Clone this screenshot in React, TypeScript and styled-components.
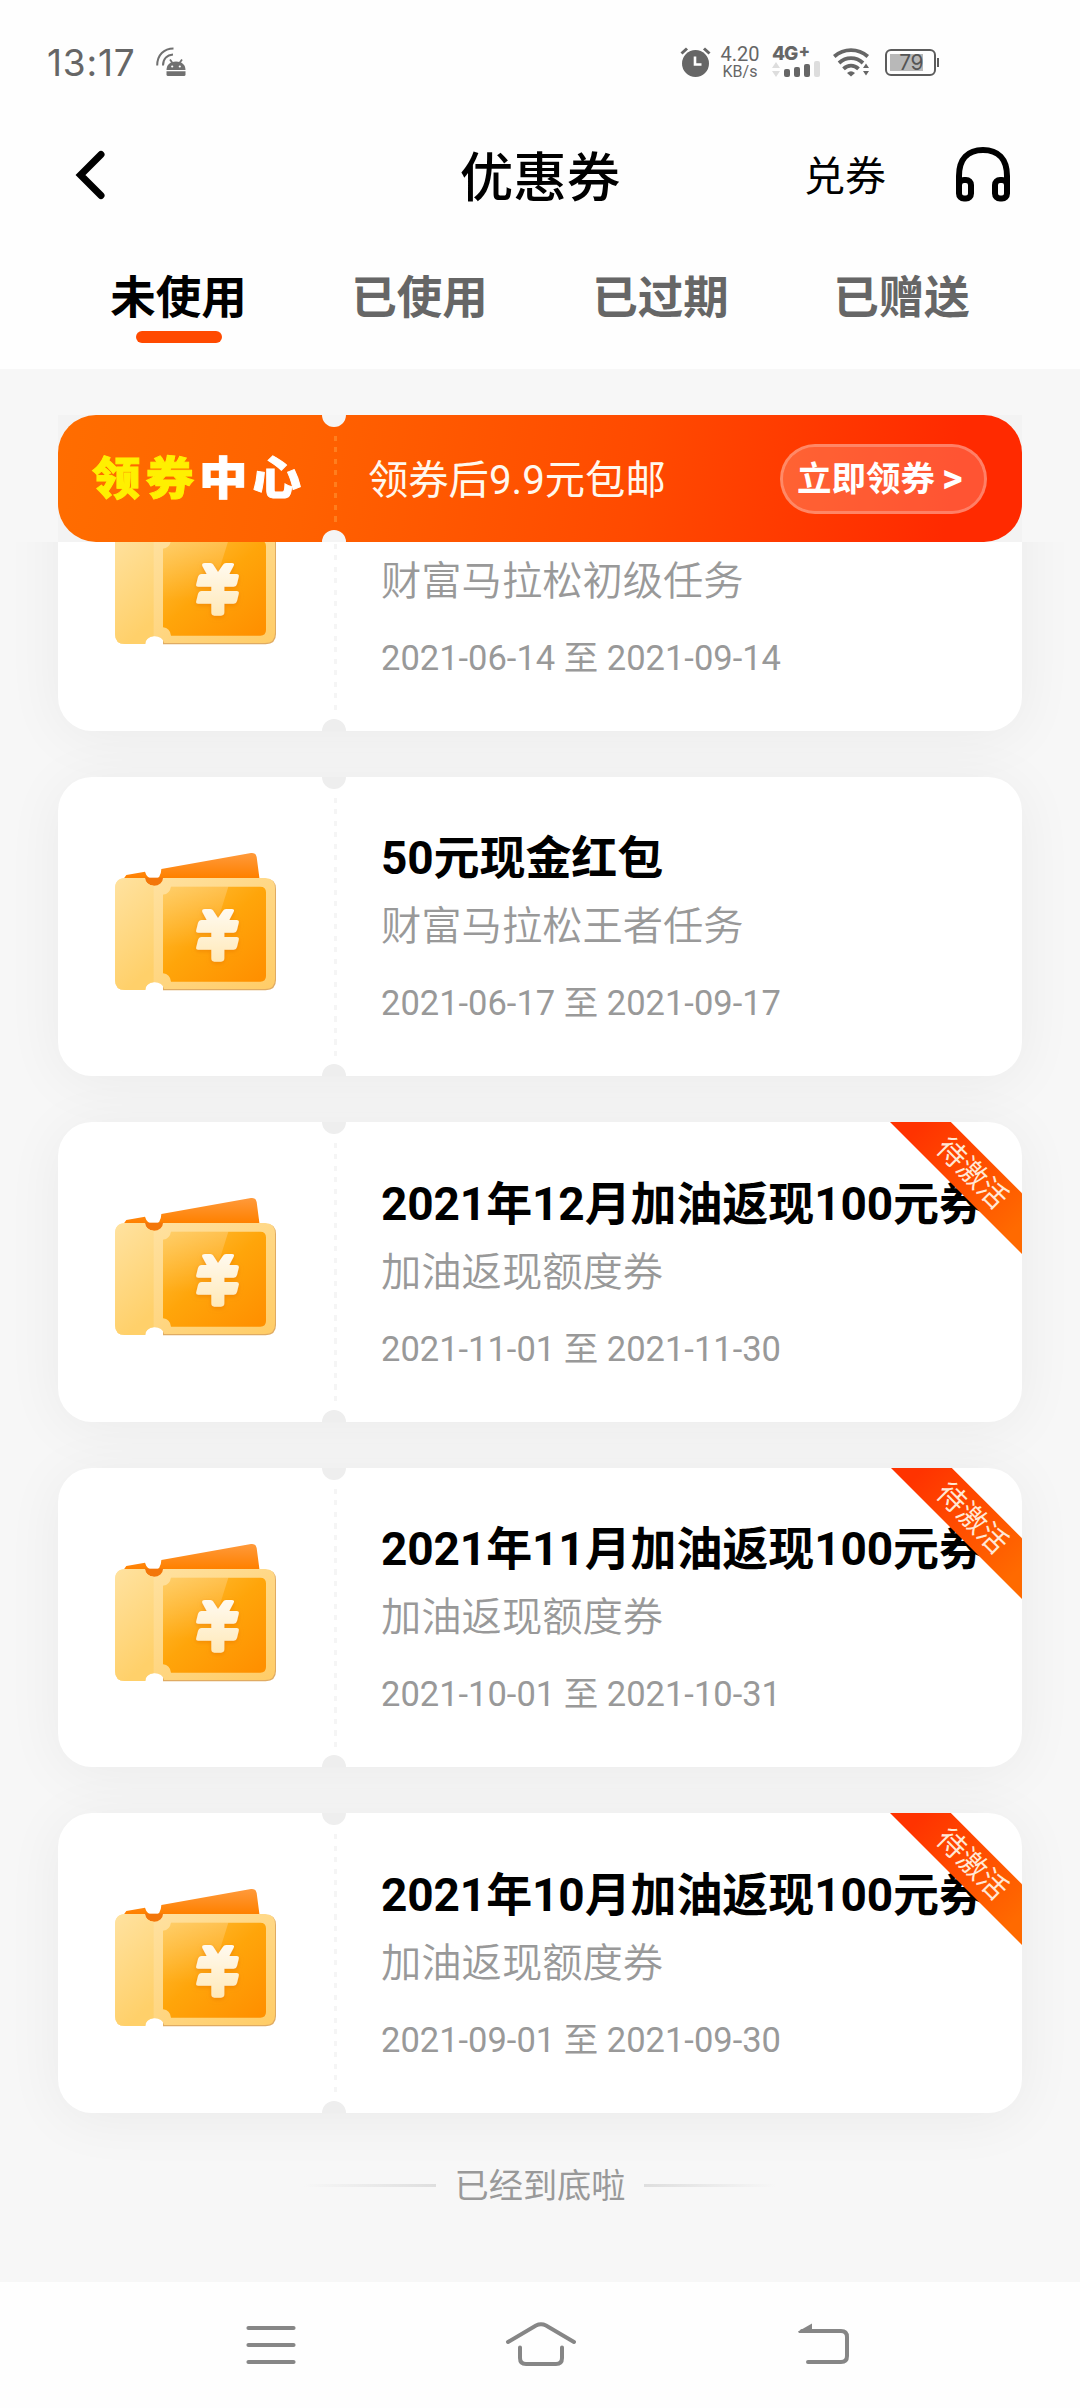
import React from 'react';
import styled, { createGlobalStyle, css } from 'styled-components';

const sans = `Roboto, 'Noto Sans CJK SC', sans-serif`;
const paper = '#f7f7f7';

const GlobalStyle = createGlobalStyle`
  * { box-sizing: border-box; }
  body { margin: 0; background: #fff; }
`;

const Screen = styled.div`
  width: 1080px;
  height: 2408px;
  display: flex;
  flex-direction: column;
  overflow: hidden;
  background: #fefefe;
  font-family: ${sans};
  color: #000;
`;

/* ---------- status bar ---------- */

const StatusBar = styled.header`
  height: 124px;
  flex: none;
  display: flex;
  align-items: center;
  padding: 0 141px 0 47px;
  color: #666;
`;

const Clock = styled.span`
  font-size: 37px;
  font-family: Inter, ${sans};
  font-weight: 400;
  letter-spacing: 0.8px;
  width: 109px;
  white-space: nowrap;
`;

const StatusRight = styled.div`
  margin-left: auto;
  display: flex;
  align-items: center;
`;

const NetSpeed = styled.div`
  width: 38px;
  margin: 0 13px 0 10px;
  display: flex;
  flex-direction: column;
  align-items: center;
  white-space: nowrap;
`;

const SpeedValue = styled.span`
  font-size: 20px;
  line-height: 18px;
`;

const SpeedUnit = styled.span`
  font-size: 16px;
  line-height: 17px;
`;

const Signal = styled.div`
  width: 49px;
  height: 30px;
  margin-right: 12px;
  display: flex;
  flex-direction: column;
  justify-content: space-between;
`;

const NetType = styled.span`
  font-family: Inter, ${sans};
  font-size: 19px;
  line-height: 14px;
  font-weight: 800;
  letter-spacing: -1px;
  white-space: nowrap;
  display: flex;
  gap: 1px;
`;

const Plus = styled.span`
  font-size: 17px;
  line-height: 8px;
`;

const Bars = styled.div`
  display: flex;
  align-items: flex-end;
  height: 16px;
  gap: 4px;
`;

const Bar = styled.i<{ $h: number; $dim?: boolean }>`
  width: 6px;
  height: ${(p) => p.$h}px;
  border-radius: 2px;
  background: ${(p) => (p.$dim ? '#ddd' : '#666')};
`;

const BatteryGroup = styled.div`
  display: flex;
  align-items: center;
  gap: 1px;
  margin-left: 15px;
`;

const Battery = styled.div`
  width: 51px;
  height: 27px;
  padding: 3px;
  border: 2px solid #5c5c5c;
  border-radius: 6px;
`;

const Charge = styled.div`
  width: 33px;
  height: 17px;
  background: #b8b8b8;
  color: #555;
  font-family: Inter, ${sans};
  font-size: 21px;
  line-height: 18px;
  letter-spacing: -0.5px;
  text-align: right;
`;

const BatteryTip = styled.i`
  width: 2px;
  height: 9px;
  background: #5c5c5c;
`;

/* ---------- title bar ---------- */

const TitleBar = styled.nav`
  height: 106px;
  flex: none;
  display: grid;
  grid-template-columns: 1fr auto 1fr;
  align-items: center;
  padding: 0 70px 5px 75px;
`;

const Title = styled.h1`
  margin: 0;
  padding: 8px 5px 0 0;
  font-size: 53.5px;
  line-height: 64px;
  font-weight: 500;
`;

const TitleActions = styled.div`
  display: flex;
  justify-content: flex-end;
  align-items: center;
  gap: 70px;
`;

const Redeem = styled.span`
  padding-top: 4px;
  font-size: 41px;
  line-height: 50px;
`;

/* ---------- tabs ---------- */

const Tabs = styled.div`
  height: 139px;
  flex: none;
  display: flex;
  padding: 0 56px 0 60px;
`;

const Tab = styled.div<{ $active?: boolean }>`
  flex: 1;
  display: flex;
  flex-direction: column;
  align-items: center;
  padding: 39px 4px 0 0;
  font-size: 45.5px;
  line-height: 60px;
  font-weight: 700;
  color: #666;
  &::after {
    content: '';
    width: 86px;
    height: 12px;
    margin-top: 2px;
    border-radius: 6px;
  }
  ${(p) =>
    p.$active &&
    css`
      color: #000;
      &::after {
        background: #ff4a00;
      }
    `}
`;

/* ---------- promo banner ---------- */

const PromoArea = styled.section`
  height: 173px;
  flex: none;
  padding: 46px 58px 0;
  background: ${paper};
`;

const PromoFrame = styled.div`
  background: #f3f3f3;
`;

const Promo = styled.div`
  position: relative;
  height: 127px;
  border-radius: 38px;
  background: linear-gradient(100deg, #ff6d00 0%, #ff6200 25%, #ff4a00 60%, #ff2a00 92%, #ff2a00 100%);
  display: flex;
  align-items: center;
  padding: 0 35px 0 34px;
`;

const PromoLogo = styled.strong`
  width: 276px;
  padding-top: 3px;
  font-size: 48.5px;
  line-height: 60px;
  font-weight: 900;
  letter-spacing: 5px;
  color: #fff;
  white-space: nowrap;
  -webkit-text-stroke: 1px currentColor;
  transform: scaleY(0.93);
`;

const Highlight = styled.span`
  color: #fff000;
`;

const PromoText = styled.span`
  flex: 1;
  padding-top: 4px;
  font-size: 40.3px;
  line-height: 54px;
  color: #fff8ee;
`;

const PromoButton = styled.div`
  width: 207px;
  height: 70px;
  display: flex;
  align-items: center;
  gap: 7px;
  padding-left: 14px;
  border: 3px solid rgba(255, 255, 255, 0.4);
  border-radius: 35px;
  background: rgba(255, 255, 255, 0.2);
  background-clip: padding-box;
  color: #fff;
  font-size: 34.5px;
  font-weight: 700;
  line-height: 44px;
  white-space: nowrap;
`;

const Chevron = styled.span`
  font-size: 40px;
  line-height: 40px;
`;

/* Perforation between the stub and the body of a ticket */
const Perforation = styled.i<{ $color: string; $dash: string }>`
  position: absolute;
  left: 264px;
  top: 0;
  bottom: 0;
  width: 24px;
  overflow: hidden;
  background: repeating-linear-gradient(
      to bottom,
      ${(p) => p.$dash} 0 5px,
      transparent 5px 11.5px
    )
    12px 21px / 3px calc(100% - 40px) no-repeat;
  &::before,
  &::after {
    content: '';
    position: absolute;
    left: 0;
    width: 24px;
    height: 24px;
    border-radius: 50%;
    background: ${(p) => p.$color};
  }
  &::before {
    top: -12px;
  }
  &::after {
    bottom: -12px;
  }
`;

/* ---------- coupon list ---------- */

const ListViewport = styled.main`
  height: 1740px;
  flex: none;
  overflow: hidden;
  background: ${paper};
`;

const List = styled.div`
  margin-top: -111px;
  padding: 0 58px;
  display: flex;
  flex-direction: column;
  gap: 46px;
`;

const Card = styled.article`
  position: relative;
  height: 299.5px;
  display: flex;
  border-radius: 34px;
  background: #fff;
  box-shadow: 0 6px 58px rgba(0, 0, 0, 0.055);
`;

const Stub = styled.div`
  width: 276px;
  flex: none;
  padding: 74px 0 0 51px;
`;

const Info = styled.div`
  flex: 1;
  display: flex;
  flex-direction: column;
  justify-content: flex-end;
  padding: 0 0 48px 47px;
  white-space: nowrap;
  color: #999;
`;

const CouponName = styled.h2`
  margin: 0 0 12px;
  font-size: 46px;
  line-height: 60px;
  font-weight: 700;
  letter-spacing: -0.1px;
  color: #000;
`;

const CouponNote = styled.p`
  margin: 0 0 24px;
  font-size: 40.3px;
  line-height: 54px;
  font-weight: 350;
`;

const CouponDate = styled.p`
  margin: 0;
  font-size: 34.5px;
  line-height: 50px;
`;

const RibbonClip = styled.div`
  position: absolute;
  top: 0;
  right: 0;
  width: 132px;
  height: 132px;
  overflow: hidden;
`;

const Ribbon = styled.div`
  position: absolute;
  left: -18.5px;
  top: 29.5px;
  width: 200px;
  height: 42.5px;
  transform: rotate(45deg);
  background: linear-gradient(to right, #ff3300 15%, #ff6a00 85%);
  color: #ffe8d6;
  font-size: 28.8px;
  line-height: 43px;
  text-align: center;
`;

const EndMark = styled.div`
  display: flex;
  justify-content: center;
  align-items: center;
  gap: 19px;
  margin-top: 3px;
  font-size: 34.2px;
  line-height: 48px;
  color: #999;
`;

const EndLine = styled.i<{ $to: string }>`
  width: 132px;
  height: 3px;
  background: linear-gradient(${(p) => p.$to}, rgba(220, 220, 220, 0), #dedede);
`;

/* ---------- system navigation ---------- */

const SystemNav = styled.footer`
  flex: 1;
  display: flex;
  justify-content: space-between;
  padding: 37px 226px 0 242px;
`;

const AlarmIcon = () => (
  <svg width="31" height="30" viewBox="0 0 31 30">
    <circle cx="15.5" cy="16.5" r="13.5" fill="#666" />
    <path d="M1.500 6.500 7 1.500M29.500 6.500 24 1.500" stroke="#666" strokeWidth="3" />
    <path d="M15 9.500V17.500H21.500" fill="none" stroke="#fff" strokeWidth="2.600" />
  </svg>
);

const CastIcon = () => (
  <svg width="30" height="30" viewBox="0 0 30 30" fill="none" stroke="#707070">
    <path d="M1.200 18.500C1.200 8 8 1.500 17.500 1.500" strokeWidth="2" />
    <path d="M7 18.500C7 12 11 8 17 7.500" strokeWidth="2" />
    <path d="M14 12.500 16.500 16M26 12.500 23.500 16" strokeWidth="1.800" />
    <path d="M10.500 23C10.500 18 14 14.500 20 14.500S29.500 18 29.500 23Z" fill="#707070" stroke="none" />
    <path d="M10.500 24.200H29.500V27.500Q29.500 29 28 29H12Q10.500 29 10.500 27.500Z" fill="#707070" stroke="none" />
    <circle cx="16.200" cy="19.500" r="1.100" fill="#fff" stroke="none" />
    <circle cx="23.800" cy="19.500" r="1.100" fill="#fff" stroke="none" />
  </svg>
);

const WifiIcon = () => (
  <svg width="37" height="29" viewBox="0 0 37 29" fill="none" stroke="#666" strokeWidth="3.800">
    <path d="M1.200 8.500C11 0 25 0 34.800 8.500" />
    <path d="M6 15C13 8.500 23 8.500 30 15" />
    <path d="M10.500 20.800C15 16.500 21 16.500 25.500 20.800" />
    <path d="M14 25Q18 21.500 22 25L18 28.500Z" fill="#666" stroke="none" />
    <path d="M30 20 33 15.500 36 20ZM30 23 33 27.500 36 23Z" fill="#666" stroke="none" />
  </svg>
);

const DataArrows = () => (
  <svg width="8" height="15" viewBox="0 0 8 15" fill="#ddd">
    <path d="M0 6 4 0 8 6ZM0 9 4 15 8 9Z" />
  </svg>
);

const BackIcon = () => (
  <svg width="30" height="50" viewBox="0 0 30 50" fill="none" stroke="#000" strokeWidth="7" strokeLinecap="round">
    <path d="M26 4.500 5.500 25 26 45.500" />
  </svg>
);

const HeadphoneIcon = () => (
  <svg width="54" height="55" viewBox="0 0 54 55" fill="none" stroke="#000" strokeWidth="6">
    <path d="M3 40V29C3 12 12 3 27 3S51 12 51 29V40" />
    <rect x="3" y="33" width="12" height="18.500" rx="5" />
    <rect x="39" y="33" width="12" height="18.500" rx="5" />
  </svg>
);

const TicketIcon = ({ id }: { id: string }) => (
  <svg width="174" height="144" viewBox="60 90 522 432">
    <defs>
      <linearGradient id={`${id}-back`} x1="0" y1="0" x2="0" y2="1">
        <stop offset="0" stopColor="#ff9a3c" />
        <stop offset="0.700" stopColor="#ff8100" />
        <stop offset="1" stopColor="#f57c0c" />
      </linearGradient>
      <linearGradient id={`${id}-stub`} x1="0" y1="0" x2="0.300" y2="1">
        <stop offset="0" stopColor="#ffe2a0" />
        <stop offset="1" stopColor="#ffd06a" />
      </linearGradient>
      <linearGradient id={`${id}-frame`} x1="0" y1="0" x2="1" y2="1">
        <stop offset="0" stopColor="#ffe4a8" />
        <stop offset="1" stopColor="#ffcc66" />
      </linearGradient>
      <linearGradient id={`${id}-face`} x1="0" y1="0" x2="0.900" y2="1">
        <stop offset="0" stopColor="#ffc140" />
        <stop offset="0.500" stopColor="#ffa50a" />
        <stop offset="1" stopColor="#ff9000" />
      </linearGradient>
      <linearGradient id={`${id}-shine`} x1="0" y1="0" x2="0" y2="1">
        <stop offset="0" stopColor="#fff" stopOpacity="0.220" />
        <stop offset="0.700" stopColor="#fff" stopOpacity="0" />
      </linearGradient>
      <linearGradient id={`${id}-sign`} x1="0" y1="0" x2="0" y2="1">
        <stop offset="0" stopColor="#fffaf0" />
        <stop offset="1" stopColor="#ffe9b8" />
      </linearGradient>
      <filter id={`${id}-soft`} x="-20%" y="-20%" width="140%" height="150%">
        <feDropShadow dx="0" dy="5" stdDeviation="6" floodColor="#e87800" floodOpacity="0.550" />
      </filter>
    </defs>
    <path
      d="M105 172 112 162 168 152Q174 174 195 174T217 144L486 96Q500 94 503 108L515 200H105Z"
      fill={`url(#${id}-back)`}
    />
    <path d="M166 170H226V194H166Z" fill="#f3760a" />
    <path d="M222 173H530Q561 173 561 204V477Q561 507.500 530 507.500H222Z" fill="#e0ab62" />
    <path
      d="M110 171H168A27 23 0 0 0 222 171H528Q558 171 558 201V474Q558 504 528 504H225A28 22 0 0 0 169 507H108Q78 507 78 477V203Q78 171 110 171Z"
      fill={`url(#${id}-frame)`}
    />
    <path
      d="M110 171H168A27 23 0 0 0 194 194V483A28 22 0 0 0 169 507H108Q78 507 78 477V203Q78 171 110 171Z"
      fill={`url(#${id}-stub)`}
    />
    <path
      d="M246 197H514Q531 197 531 214V465Q531 482 514 482H246Q243 459 222 457V221Q243 218 246 197Z"
      fill={`url(#${id}-face)`}
    />
    <path d="M246 197H418L345 430 222 457V221Q243 218 246 197Z" fill={`url(#${id}-shine)`} />
    <g filter={`url(#${id}-soft)`} fill={`url(#${id}-sign)`}>
      <path d="M348 264H364Q370 264 373 269L387 291 402 269Q405 264 411 264H428Q438 264 434 272L421 297H442Q452 297 449 307L444 327Q442 335 434 335H406V348H442Q452 348 449 358L444 378Q442 386 434 386H406V412Q406 422 396 422H376Q367 422 367 412V386H328Q319 386 322 377L327 357Q330 348 338 348H367V335H328Q319 335 322 326L327 306Q330 297 338 297H353L340 273Q337 264 348 264Z" />
    </g>
  </svg>
);

const MenuIcon = () => (
  <svg width="60" height="56" viewBox="242 2319 60 56" stroke="#868686" strokeWidth="4.200" strokeLinecap="round">
    <path d="M248.500 2328H293.500M248.500 2345H293.500M248.500 2362H293.500" />
  </svg>
);

const HomeIcon = () => (
  <svg width="90" height="56" viewBox="504 2319 90 56" fill="none" stroke="#868686" strokeWidth="4" strokeLinecap="round">
    <path d="M508 2342 536 2325.500Q541 2323 546 2325.500L574 2342" />
    <path d="M520 2347.500V2358Q520 2364 526 2364H556Q562 2364 562 2358V2347.500" />
  </svg>
);

const ReturnIcon = () => (
  <svg width="58" height="56" viewBox="796 2319 58 56" fill="none" stroke="#868686" strokeWidth="4" strokeLinecap="round">
    <path d="M802 2331H841Q847 2331 847 2337V2356Q847 2362 841 2362H808" />
    <path d="M798 2331.500 812 2323.500V2333H799Z" fill="#868686" stroke="none" />
  </svg>
);

type Coupon = { name?: string; note: string; from: string; to: string; pending?: boolean };

const coupons: Coupon[] = [
  { note: '财富马拉松初级任务', from: '2021-06-14', to: '2021-09-14' },
  { name: '50元现金红包', note: '财富马拉松王者任务', from: '2021-06-17', to: '2021-09-17' },
  { name: '2021年12月加油返现100元券', note: '加油返现额度券', from: '2021-11-01', to: '2021-11-30', pending: true },
  { name: '2021年11月加油返现100元券', note: '加油返现额度券', from: '2021-10-01', to: '2021-10-31', pending: true },
  { name: '2021年10月加油返现100元券', note: '加油返现额度券', from: '2021-09-01', to: '2021-09-30', pending: true },
];

const tabs = ['未使用', '已使用', '已过期', '已赠送'];

const CouponCard = ({ coupon, id }: { coupon: Coupon; id: string }) => (
  <Card>
    <Stub>
      <TicketIcon id={id} />
    </Stub>
    <Info>
      {coupon.name && <CouponName>{coupon.name}</CouponName>}
      <CouponNote>{coupon.note}</CouponNote>
      <CouponDate>
        {coupon.from} 至 {coupon.to}
      </CouponDate>
    </Info>
    <Perforation $color="#eeeeee" $dash="#f5f5f5" />
    {coupon.pending && (
      <RibbonClip>
        <Ribbon>待激活</Ribbon>
      </RibbonClip>
    )}
  </Card>
);

export default function App() {
  return (
    <>
      <GlobalStyle />
      <Screen>
        <StatusBar>
          <Clock>13:17</Clock>
          <CastIcon />
          <StatusRight>
            <AlarmIcon />
            <NetSpeed>
              <SpeedValue>4.20</SpeedValue>
              <SpeedUnit>KB/s</SpeedUnit>
            </NetSpeed>
            <Signal>
              <NetType>
                4G<Plus>+</Plus>
              </NetType>
              <Bars>
                <DataArrows />
                <Bar $h={8} />
                <Bar $h={10} />
                <Bar $h={13} />
                <Bar $h={16} $dim />
              </Bars>
            </Signal>
            <WifiIcon />
            <BatteryGroup>
              <Battery>
                <Charge>79</Charge>
              </Battery>
              <BatteryTip />
            </BatteryGroup>
          </StatusRight>
        </StatusBar>

        <TitleBar>
          <BackIcon />
          <Title>优惠券</Title>
          <TitleActions>
            <Redeem>兑券</Redeem>
            <HeadphoneIcon />
          </TitleActions>
        </TitleBar>

        <Tabs>
          {tabs.map((label, i) => (
            <Tab key={label} $active={i === 0}>
              {label}
            </Tab>
          ))}
        </Tabs>

        <PromoArea>
          <PromoFrame>
            <Promo>
              <PromoLogo>
                <Highlight>领券</Highlight>中心
              </PromoLogo>
              <PromoText>领券后9.9元包邮</PromoText>
              <PromoButton>
                立即领券<Chevron>&gt;</Chevron>
              </PromoButton>
              <Perforation $color="#f5f5f5" $dash="rgba(255,220,120,0.25)" />
            </Promo>
          </PromoFrame>
        </PromoArea>

        <ListViewport>
          <List>
            {coupons.map((coupon, i) => (
              <CouponCard key={i} coupon={coupon} id={`ticket${i}`} />
            ))}
            <EndMark>
              <EndLine $to="to right" />
              已经到底啦
              <EndLine $to="to left" />
            </EndMark>
          </List>
        </ListViewport>

        <SystemNav>
          <MenuIcon />
          <HomeIcon />
          <ReturnIcon />
        </SystemNav>
      </Screen>
    </>
  );
}
